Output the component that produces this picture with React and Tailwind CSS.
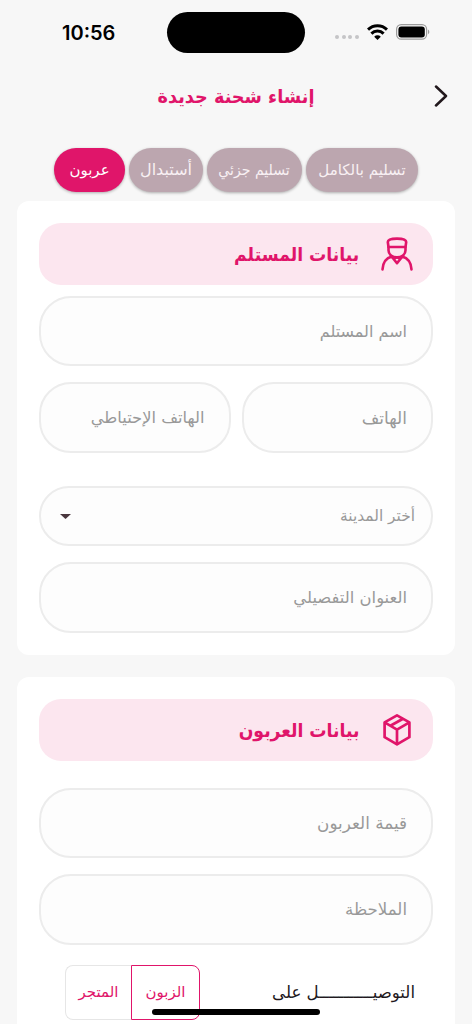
const tabs = [
  { title: 'تسليم بالكامل', box: 'w-28', text: 'text-[15px]' },
  { title: 'تسليم جزئي', box: 'w-[95px]', text: 'text-[15px] scale-x-[0.94]' },
  { title: 'أستبدال', box: 'w-[74px]', text: 'text-[16px]' },
  { title: 'عربون', box: 'w-[71px]', text: 'text-[15px]', active: true },
];

function StatusBar() {
  return (
    <div dir="ltr" className="flex h-[65px] shrink-0 items-center">
      <span className="ml-[62px] w-[105px] font-[Inter] text-[20px] font-semibold text-black">10:56</span>
      <div className="h-[41px] w-[138px] rounded-full bg-black" />
      <div className="ml-[30px] mt-2 flex gap-[2.5px]">
        <i className="size-1 rounded-full bg-[#c5c5c7]" />
        <i className="size-1 rounded-full bg-[#c5c5c7]" />
        <i className="size-1 rounded-full bg-[#c5c5c7]" />
        <i className="size-1 rounded-full bg-[#c5c5c7]" />
      </div>
      <svg className="mt-[-2px] ml-2 h-4 w-[21px]" viewBox="0 0 21 16" fill="none" stroke="#000" strokeWidth="3">
        <path d="M1 5.6a13.6 13.6 0 0 1 19 0M4.4 9.6a8.7 8.7 0 0 1 12.2 0" />
        <path d="M10.5 16 7.2 12.7a4.7 4.7 0 0 1 6.6 0z" fill="#000" stroke="none" />
      </svg>
      <svg className="mt-[-1px] ml-[8px] h-4 w-[34px]" viewBox="0 0 34 16" fill="none">
        <rect x=".6" y=".6" width="30" height="14.6" rx="4.6" stroke="#9b9b9b" strokeWidth="1.2" />
        <rect x="2.4" y="2.4" width="26.4" height="11" rx="3" fill="#000" />
        <path d="M32 5.5c1.8.8 1.8 4 0 4.8z" fill="#9b9b9b" />
      </svg>
    </div>
  );
}

function PersonIcon() {
  return (
    <svg className="h-[34px] w-8" viewBox="0 0 32 34" fill="none" stroke="#e0156a" strokeWidth="2.6" strokeLinecap="round" strokeLinejoin="round">
      <path d="M7.5 10 6.800 5C6.800 2.700 9 1.600 16 1.600s9.200 1.100 9.200 3.400l-.7 5z" />
      <path d="M7.500 10v3.200c0 4.400 4 7.200 8.500 7.200s8.500-2.800 8.500-7.200V10" />
      <path d="M1.500 32.400c.5-6.800 4-11.400 9.300-12.800l5.200 6.600 5.200-6.600c5.300 1.400 8.800 6 9.300 12.800M12.500 21.500l3.500-1.300 3.500 1.300" />
    </svg>
  );
}

function BoxIcon() {
  return (
    <svg className="h-[34px] w-8" viewBox="0 0 32 34" fill="none" stroke="#e0156a" strokeWidth="2.7" strokeLinejoin="round">
      <path d="M16 2.300 28.400 9.400v14.800L16 31.400 3.600 24.200V9.400z" />
      <path d="M3.600 9.400 16 16.600l12.400-7.200M16 16.600v14.800M9.400 12.800 22 5.700" />
    </svg>
  );
}

function SectionTitle({ icon, title }) {
  return (
    <div className="flex h-[61.500px] items-center rounded-[22px] bg-[#fce6ef] pr-5">
      {icon}
      <h2 className="mr-[22px] origin-right scale-x-[0.905] text-[19px] font-bold whitespace-nowrap text-[#e0156a]">{title}</h2>
    </div>
  );
}

function Field({ label, size = 'text-[16px]', className = '' }) {
  return (
    <div className={`flex h-[70.500px] items-center rounded-[32px] border-2 border-[#ececec] bg-[#fdfdfd] pt-0.5 pr-6 whitespace-nowrap text-[#999] ${size} ${className}`}>
      <span>{label}</span>
    </div>
  );
}

function App() {
  return (
    <div dir="rtl" className="relative flex h-[1024px] w-[472px] flex-col overflow-hidden bg-[#f7f7f7] font-['DejaVu_Sans',sans-serif]">
      <StatusBar />

      <header className="grid h-[62px] shrink-0 grid-cols-[54px_1fr_54px] items-center">
        <svg className="mr-6 h-[22px] w-[14px]" viewBox="0 0 14 22" fill="none" stroke="#21181c" strokeWidth="2.500" strokeLinecap="round" strokeLinejoin="round">
          <path d="M2 1.500 12 11 2 20.500" />
        </svg>
        <h1 className="scale-x-[0.93] text-center text-[19px] font-bold whitespace-nowrap text-[#e0156a]">إنشاء شحنة جديدة</h1>
      </header>

      <nav className="mt-[21px] flex shrink-0 gap-1 pr-[54px]">
        {tabs.map((tab) => (
          <button
            key={tab.title}
            className={`flex h-11 items-center justify-center rounded-[22px] whitespace-nowrap shadow-[0_1px_3px_rgba(0,0,0,0.3)] ${tab.box} ${tab.active ? 'bg-[#e0156a] text-white' : 'bg-[#bca6af] text-[#f8f0f3]'}`}
          >
            <span className={tab.text}>{tab.title}</span>
          </button>
        ))}
      </nav>

      <section className="mx-[17px] mt-[9px] h-[454px] shrink-0 rounded-xl bg-white px-[22px] pt-[22px]">
        <SectionTitle icon={<PersonIcon />} title="بيانات المستلم" />
        <Field label="اسم المستلم" className="mt-[11px]" />
        <div className="mt-4 grid grid-cols-2 gap-[11px]">
          <Field label="الهاتف" size="text-[17px]" />
          <Field label="الهاتف الإحتياطي" size="text-[16.3px]" />
        </div>
        <div className="mt-[33px] flex h-[60px] items-center justify-between rounded-[30px] border-2 border-[#ececec] bg-[#fdfdfd] pt-0.5 pr-4 pl-[19px] text-[15.4px] text-[#999]">
          <span>أختر المدينة</span>
          <svg className="h-[5px] w-[11px]" viewBox="0 0 10 5" preserveAspectRatio="none" fill="#4a373e">
            <path d="M0 0h10L5 5z" />
          </svg>
        </div>
        <Field label="العنوان التفصيلي" size="text-[16.4px]" className="mt-[16.500px]" />
      </section>

      <section className="mx-[17px] mt-[22px] h-[400px] shrink-0 rounded-t-xl bg-white px-[22px] pt-[22px]">
        <SectionTitle icon={<BoxIcon />} title="بيانات العربون" />
        <Field label="قيمة العربون" size="text-[16.8px]" className="mt-[27px]" />
        <Field label="الملاحظة" size="text-[16.6px]" className="mt-4" />
        <div className="mt-5 flex items-center justify-between pr-[18px] pl-[26px]">
          <span className="pt-0.5 text-[16.6px] whitespace-nowrap text-[#21181c]">التوصيـــــــــــل على</span>
          <div className="flex h-[55px] text-[15px] text-[#e0156a]">
            <button className="w-[69px] rounded-r-lg border border-[#e0156a]">الزبون</button>
            <button className="w-[66px] rounded-l-lg border border-r-0 border-[#e6e6e6]">المتجر</button>
          </div>
        </div>
      </section>

      <div className="absolute bottom-[9px] left-[152px] h-[6px] w-[168px] rounded-full bg-black" />
    </div>
  );
}

export default App;
